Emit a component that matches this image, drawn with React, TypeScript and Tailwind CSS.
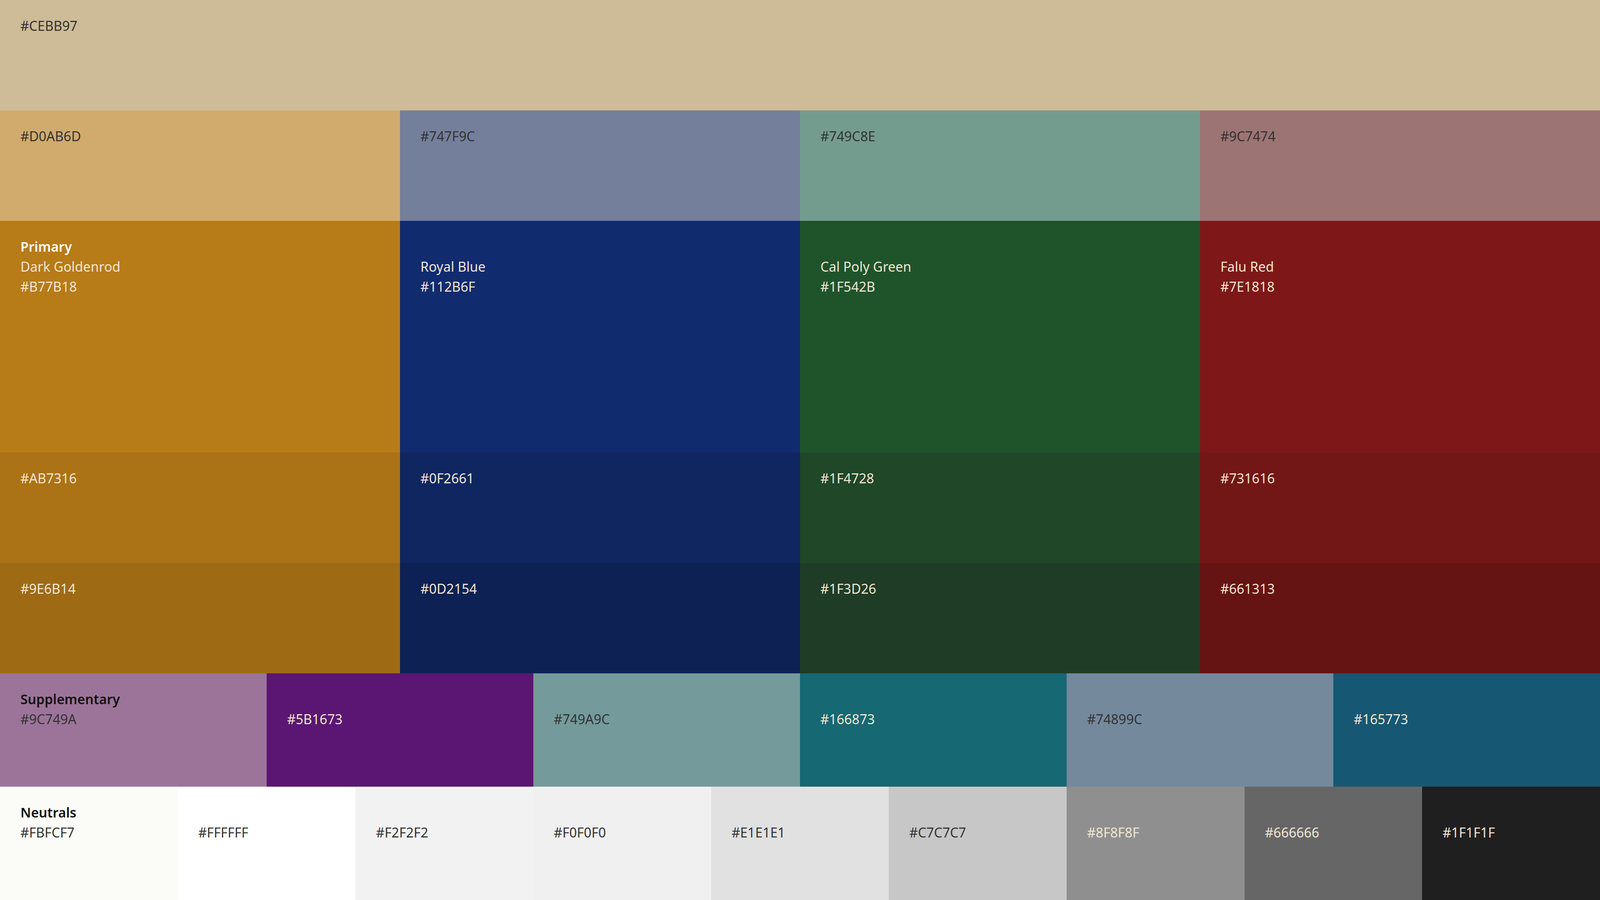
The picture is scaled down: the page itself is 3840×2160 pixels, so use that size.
type Swatch = { hex: string; title?: string; name?: string; light?: boolean; bg: string };

const rows: { h: string; cols: string; items: Swatch[] }[] = [
  { h: "h-[265px]", cols: "grid-cols-1", items: [{ hex: "#CEBB97", bg: "bg-[#CEBB97]" }] },
  {
    h: "h-[265px]",
    cols: "grid-cols-4",
    items: [
      { hex: "#D0AB6D", bg: "bg-[#D0AB6D]" },
      { hex: "#747F9C", bg: "bg-[#747F9C]" },
      { hex: "#749C8E", bg: "bg-[#749C8E]" },
      { hex: "#9C7474", bg: "bg-[#9C7474]" },
    ],
  },
  {
    h: "h-[556px]",
    cols: "grid-cols-4",
    items: [
      { hex: "#B77B18", title: "Primary", name: "Dark Goldenrod", light: true, bg: "bg-[#B77B18]" },
      { hex: "#112B6F", title: "", name: "Royal Blue", light: true, bg: "bg-[#112B6F]" },
      { hex: "#1F542B", title: "", name: "Cal Poly Green", light: true, bg: "bg-[#1F542B]" },
      { hex: "#7E1818", title: "", name: "Falu Red", light: true, bg: "bg-[#7E1818]" },
    ],
  },
  {
    h: "h-[265px]",
    cols: "grid-cols-4",
    items: [
      { hex: "#AB7316", light: true, bg: "bg-[#AB7316]" },
      { hex: "#0F2661", light: true, bg: "bg-[#0F2661]" },
      { hex: "#1F4728", light: true, bg: "bg-[#1F4728]" },
      { hex: "#731616", light: true, bg: "bg-[#731616]" },
    ],
  },
  {
    h: "h-[265px]",
    cols: "grid-cols-4",
    items: [
      { hex: "#9E6B14", light: true, bg: "bg-[#9E6B14]" },
      { hex: "#0D2154", light: true, bg: "bg-[#0D2154]" },
      { hex: "#1F3D26", light: true, bg: "bg-[#1F3D26]" },
      { hex: "#661313", light: true, bg: "bg-[#661313]" },
    ],
  },
  {
    h: "h-[272px]",
    cols: "grid-cols-6",
    items: [
      { hex: "#9C749A", title: "Supplementary", bg: "bg-[#9C749A]" },
      { hex: "#5B1673", title: "", light: true, bg: "bg-[#5B1673]" },
      { hex: "#749A9C", title: "", bg: "bg-[#749A9C]" },
      { hex: "#166873", title: "", light: true, bg: "bg-[#166873]" },
      { hex: "#74899C", title: "", bg: "bg-[#74899C]" },
      { hex: "#165773", title: "", light: true, bg: "bg-[#165773]" },
    ],
  },
  {
    h: "h-[272px]",
    cols: "grid-cols-9",
    items: [
      { hex: "#FBFCF7", title: "Neutrals", bg: "bg-[#FBFCF7]" },
      { hex: "#FFFFFF", title: "", bg: "bg-[#FFFFFF]" },
      { hex: "#F2F2F2", title: "", bg: "bg-[#F2F2F2]" },
      { hex: "#F0F0F0", title: "", bg: "bg-[#F0F0F0]" },
      { hex: "#E1E1E1", title: "", bg: "bg-[#E1E1E1]" },
      { hex: "#C7C7C7", title: "", bg: "bg-[#C7C7C7]" },
      { hex: "#8F8F8F", title: "", light: true, bg: "bg-[#8F8F8F]" },
      { hex: "#666666", title: "", light: true, bg: "bg-[#666666]" },
      { hex: "#1F1F1F", title: "", light: true, bg: "bg-[#1F1F1F]" },
    ],
  },
];

export default function App() {
  return (
    <div className="w-[3840px] h-[2160px] overflow-hidden font-['Montserrat','Lato','Inter',sans-serif] text-[32px] leading-[48px]">
      {rows.map((r, i) => (
        <div key={i} className={`grid ${r.cols} ${r.h}`}>
          {r.items.map((s) => (
            <div key={s.hex} className={`${s.bg} pl-[49px] pt-[38px]`}>
              {s.title !== undefined && (
                <div className={`h-[48px] font-semibold ${s.light ? "text-white" : "text-[#111]"}`}>{s.title}</div>
              )}
              {s.name && <div className="text-[#F2E6D3]">{s.name}</div>}
              <div className={s.light ? "text-[#F2E6D3]" : "text-[#333]"}>{s.hex}</div>
            </div>
          ))}
        </div>
      ))}
    </div>
  );
}
